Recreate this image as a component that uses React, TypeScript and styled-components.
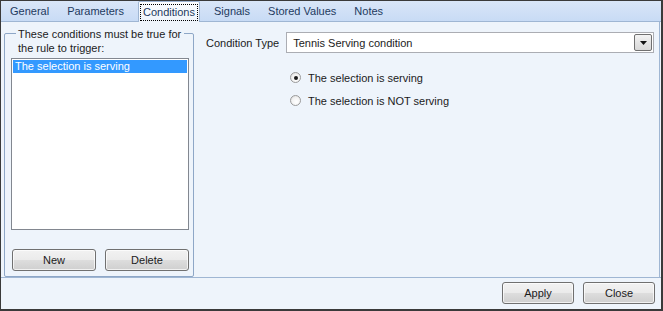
import React, { useState } from 'react';
import styled, { createGlobalStyle } from 'styled-components';

const GlobalStyle = createGlobalStyle`
  html, body {
    margin: 0;
    padding: 0;
    background: #ffffff;
  }
  body {
    font-family: "Liberation Sans", Arial, sans-serif;
    font-size: 11px;
    color: #1b1b1b;
  }
  * {
    box-sizing: border-box;
  }
`;

const Window = styled.div`
  width: 663px;
  height: 311px;
  display: flex;
  flex-direction: column;
  border-style: solid;
  border-color: #3a3a3a;
  border-width: 1px 2px 2px 1px;
  background: #eef4fb;
`;

const TabStrip = styled.div`
  height: 21px;
  display: flex;
  align-items: flex-end;
  background: linear-gradient(to bottom, #d9e6f8 0%, #c8dbf5 100%);
  border-bottom: 1px solid #9fb6d3;
`;

const Tab = styled.div<{ $active?: boolean }>`
  height: ${(p) => (p.$active ? '21px' : '20px')};
  display: flex;
  align-items: center;
  padding: ${(p) => (p.$active ? '0 1px' : '0 9px')};
  margin: ${(p) => (p.$active ? '0 5px -1px 5px' : '0')};
  color: #1e3a5e;
  white-space: nowrap;
  background: ${(p) =>
    p.$active ? 'linear-gradient(to bottom, #fbfdff 0%, #eef4fb 100%)' : 'transparent'};
  border: ${(p) => (p.$active ? '1px solid #9fb6d3' : 'none')};
  border-bottom: none;
  border-radius: ${(p) => (p.$active ? '2px 2px 0 0' : '0')};
`;

const FocusRect = styled.span`
  display: flex;
  align-items: center;
  height: 17px;
  padding: 0 3px;
  outline: 1px dotted #000000;
  outline-offset: -1px;
`;

const Panel = styled.div`
  flex: 1;
  display: flex;
  margin-right: 1px;
  padding: 4px 0 0 3px;
  border-right: 1px solid #9fb6d3;
`;

const GroupBox = styled.div`
  width: 190px;
  margin-top: 7px;
  display: flex;
  flex-direction: column;
  border: 1px solid #8ea7c7;
  border-radius: 2px;
  padding: 0 0 5px 6px;
`;

const GroupTitle = styled.div`
  align-self: flex-start;
  margin: -7px 0 0 5px;
  padding: 0 2px;
  width: 168px;
  line-height: 14px;
  background: #eef4fb;
  color: #1b1b1b;
`;

const ListBox = styled.div`
  width: 178px;
  height: 172px;
  margin-top: 3px;
  background: #ffffff;
  border: 1px solid #828790;
  padding: 1px;
`;

const ListItem = styled.div<{ $selected?: boolean }>`
  height: 13px;
  line-height: 13px;
  padding-left: 2px;
  background: ${(p) => (p.$selected ? '#3399ff' : 'transparent')};
  color: ${(p) => (p.$selected ? '#ffffff' : '#1b1b1b')};
`;

const ButtonRow = styled.div`
  display: flex;
  gap: 9px;
  margin-top: 19px;
  margin-left: 1px;
`;

const Button = styled.button<{ $width: number }>`
  width: ${(p) => p.$width}px;
  height: 22px;
  padding: 0;
  font-family: "Liberation Sans", Arial, sans-serif;
  font-size: 11px;
  color: #1b1b1b;
  border: 1px solid #707070;
  border-radius: 3px;
  background: linear-gradient(to bottom, #f2f2f2 0%, #ebebeb 48%, #dddddd 52%, #cfcfcf 100%);
  box-shadow: inset 0 0 0 1px rgba(255, 255, 255, 0.7);
`;

const Content = styled.div`
  flex: 1;
  display: flex;
  flex-direction: column;
  padding: 6px 5px 0 12px;
`;

const FieldRow = styled.div`
  display: flex;
  align-items: center;
  gap: 7px;
`;

const Label = styled.span`
  color: #1b1b1b;
  white-space: nowrap;
`;

const Combo = styled.div`
  flex: 1;
  height: 21px;
  display: flex;
  align-items: center;
  background: #ffffff;
  border: 1px solid #abadb3;
  padding: 0 1px 0 6px;
`;

const ComboText = styled.span`
  flex: 1;
  color: #1b1b1b;
`;

const DropButton = styled.div`
  width: 18px;
  height: 17px;
  display: flex;
  align-items: center;
  justify-content: center;
  border: 1px solid #707070;
  border-radius: 2px;
  background: linear-gradient(to bottom, #f4f4f4 0%, #e4e4e4 50%, #d8d8d8 100%);
`;

const RadioGroup = styled.div`
  display: flex;
  flex-direction: column;
  gap: 10px;
  margin: 18px 0 0 84px;
`;

const RadioRow = styled.label`
  display: flex;
  align-items: center;
  gap: 7px;
  height: 13px;
  color: #1b1b1b;
`;

const RadioCircle = styled.span<{ $checked?: boolean }>`
  width: 11px;
  height: 11px;
  border-radius: 50%;
  border: 1px solid #9a9a9a;
  background: radial-gradient(circle at 60% 65%, #ffffff 0%, #f2f2f2 55%, #d4d4d4 100%);
  display: flex;
  align-items: center;
  justify-content: center;

  &::after {
    content: '';
    width: 4px;
    height: 4px;
    border-radius: 50%;
    background: ${(p) => (p.$checked ? '#1a1a1a' : 'transparent')};
  }
`;

const Footer = styled.div`
  height: 32px;
  display: flex;
  align-items: center;
  justify-content: flex-end;
  gap: 9px;
  padding: 0 6px 1px 0;
  border-top: 1px solid #9fb6d3;
`;

const tabs = ['General', 'Parameters', 'Conditions', 'Signals', 'Stored Values', 'Notes'];

const App: React.FC = () => {
  const [serving, setServing] = useState(true);

  return (
    <>
      <GlobalStyle />
      <Window>
        <TabStrip>
          {tabs.map((t) =>
            t === 'Conditions' ? (
              <Tab key={t} $active>
                <FocusRect>{t}</FocusRect>
              </Tab>
            ) : (
              <Tab key={t}>{t}</Tab>
            ),
          )}
        </TabStrip>
        <Panel>
          <GroupBox>
            <GroupTitle>These conditions must be true for the rule to trigger:</GroupTitle>
            <ListBox>
              <ListItem $selected>The selection is serving</ListItem>
            </ListBox>
            <ButtonRow>
              <Button $width={84}>New</Button>
              <Button $width={84}>Delete</Button>
            </ButtonRow>
          </GroupBox>
          <Content>
            <FieldRow>
              <Label>Condition Type</Label>
              <Combo>
                <ComboText>Tennis Serving condition</ComboText>
                <DropButton>
                  <svg width="7" height="4" viewBox="0 0 7 4">
                    <path d="M0 0 H7 L3.5 4 Z" fill="#111111" />
                  </svg>
                </DropButton>
              </Combo>
            </FieldRow>
            <RadioGroup>
              <RadioRow onClick={() => setServing(true)}>
                <RadioCircle $checked={serving} />
                The selection is serving
              </RadioRow>
              <RadioRow onClick={() => setServing(false)}>
                <RadioCircle $checked={!serving} />
                The selection is NOT serving
              </RadioRow>
            </RadioGroup>
          </Content>
        </Panel>
        <Footer>
          <Button $width={72}>Apply</Button>
          <Button $width={72}>Close</Button>
        </Footer>
      </Window>
    </>
  );
};

export default App;
